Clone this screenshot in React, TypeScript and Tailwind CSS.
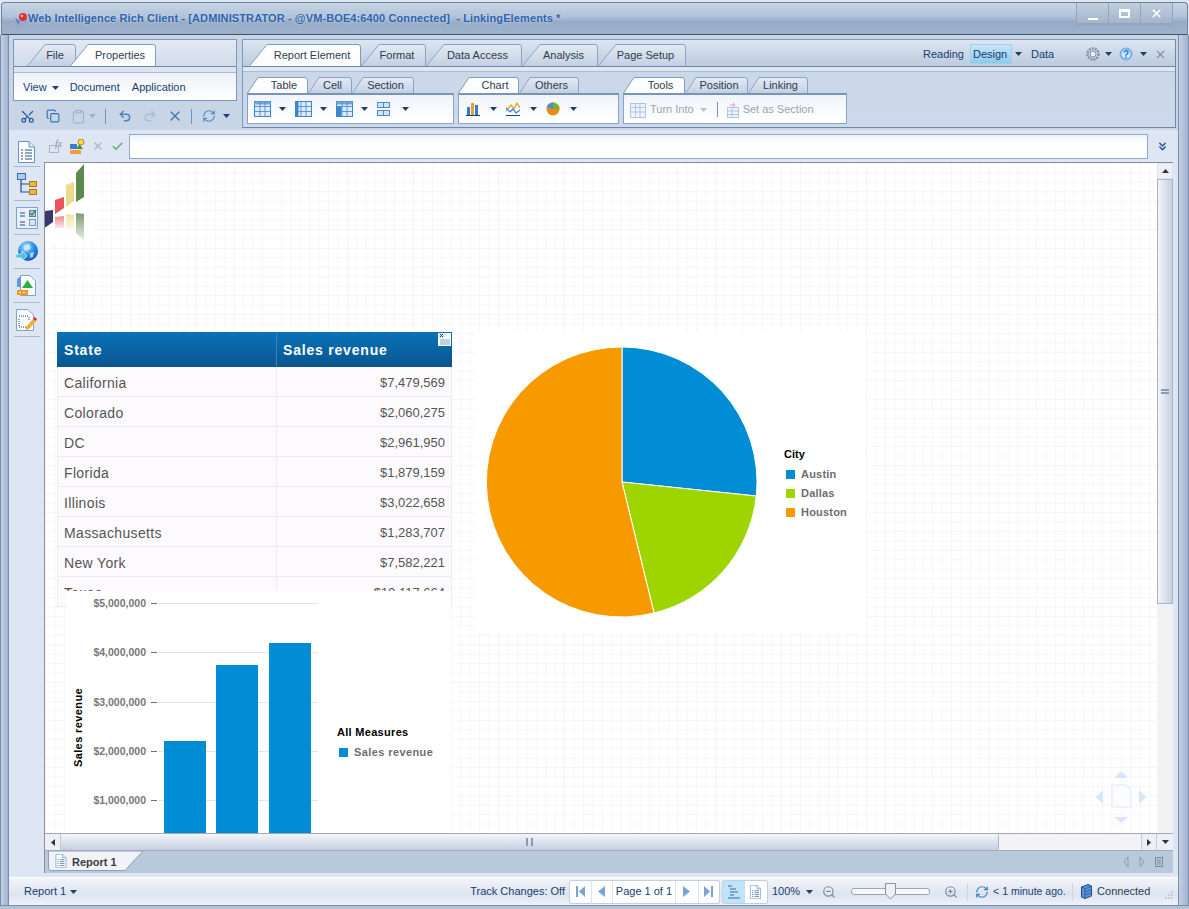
import { Check, ChevronsDown, Clipboard, Copy, Redo2, RefreshCw, Scissors, Undo2, X, ZoomIn, ZoomOut } from "lucide-react";
import type { ReactNode } from "react";

const rows = [
  ["California", "$7,479,569"],
  ["Colorado", "$2,060,275"],
  ["DC", "$2,961,950"],
  ["Florida", "$1,879,159"],
  ["Illinois", "$3,022,658"],
  ["Massachusetts", "$1,283,707"],
  ["New York", "$7,582,221"],
  ["Texas", "$10,117,664"],
];

const ticks = [
  { label: "$5,000,000", y: 12 },
  { label: "$4,000,000", y: 61 },
  { label: "$3,000,000", y: 111 },
  { label: "$2,000,000", y: 160 },
  { label: "$1,000,000", y: 209 },
];

const bars = [
  { x: 98, y: 150 },
  { x: 150, y: 74 },
  { x: 203, y: 52 },
];

function Caret({ className = "" }: { className?: string }) {
  return (
    <svg width="7" height="4" viewBox="0 0 7 4" className={className}>
      <path d="M0 0h7L3.5 4z" fill="#1c3f6e" />
    </svg>
  );
}

function Tab({
  label,
  active = false,
  width,
  small = false,
  className = "",
}: {
  label: string;
  active?: boolean;
  width: number;
  small?: boolean;
  className?: string;
}) {
  const h = small ? 16 : 22;
  const s = small ? 11 : 18;
  const id = `t${label.replace(/\s/g, "")}`;
  const pad = small ? (active ? "pl-[13px]" : "pl-[5px]") : active ? "pl-[14px]" : "pl-[7px]";
  return (
    <div className={`relative shrink-0 ${className}`} style={{ width, height: h }}>
      <svg width={width} height={h} className="absolute inset-0">
        <defs>
          <linearGradient id={id} x1="0" x2="0" y1="0" y2="1">
            <stop offset="0" stopColor={active ? "#ffffff" : "#e4eaf4"} />
            <stop offset="1" stopColor={active ? "#fbfcfe" : "#c3d0e3"} />
          </linearGradient>
        </defs>
        <path
          d={`M0.5 ${h} L${s} 0.5 H${width - 3} Q${width - 0.5} 0.5 ${width - 0.5} 3 V${h}`}
          fill={`url(#${id})`}
          stroke={active ? "#7f9dc0" : "#8ba4c4"}
        />
      </svg>
      <span className={`absolute inset-0 flex items-center justify-center pt-[1px] text-[11px] ${pad} text-[#2f3d4e]`}>
        {label}
      </span>
    </div>
  );
}

function GridIcon({ fill = "#3e86c9", mode = "all" }: { fill?: string; mode?: "all" | "cols" | "rows" }) {
  return (
    <svg width="17" height="16" viewBox="0 0 17 16">
      <rect x="0.5" y="0.5" width="16" height="15" fill="#dcebfa" stroke={fill} />
      {mode === "all" && <rect x="0.5" y="0.5" width="16" height="3" fill="#70a8e0" />}
      {mode === "cols" && <rect x="0.5" y="0.5" width="3" height="15" fill={fill} />}
      {mode === "rows" && (
        <>
          <rect x="0.5" y="0.5" width="16" height="3" fill="#70a8e0" />
          <rect x="0.5" y="5.5" width="5" height="10" fill={fill} />
        </>
      )}
      <path d="M1 5.5H16M1 10.5H16M6 1V15M11 1V15" stroke={fill} strokeWidth="0.8" />
    </svg>
  );
}

function SectionIcon() {
  return (
    <svg width="13" height="16" viewBox="0 0 13 16">
      <rect x="0.5" y="1.5" width="12" height="5" fill="#cfe2f6" stroke="#4a8bc9" />
      <rect x="0.5" y="9.5" width="12" height="5" fill="#cfe2f6" stroke="#4a8bc9" />
      <path d="M6.5 2V6M6.5 10V14" stroke="#4a8bc9" />
    </svg>
  );
}

function BarsIcon() {
  return (
    <svg width="14" height="14" viewBox="0 0 14 14">
      <rect x="1" y="5" width="3" height="8" fill="#2f7fd0" />
      <rect x="5" y="1" width="3" height="12" fill="#f0a020" />
      <rect x="9" y="3" width="3" height="10" fill="#2f7fd0" />
      <path d="M0 13.5H14" stroke="#1c3f6e" />
    </svg>
  );
}

function LineIcon() {
  return (
    <svg width="14" height="14" viewBox="0 0 14 14" fill="none">
      <path d="M0 9L5 3L8 7L11 1L14 6" stroke="#f0a020" strokeWidth="1.3" />
      <path d="M0 6L4 10L7 7L10 11L14 8" stroke="#2f7fd0" strokeWidth="1.2" />
      <path d="M0 13.5H14" stroke="#1c3f6e" />
    </svg>
  );
}

function PieIcon({ size = 14 }: { size?: number }) {
  return (
    <svg width={size} height={size} viewBox="0 0 14 14">
      <circle cx="7" cy="7" r="6.5" fill="#e88a18" />
      <path d="M7 7V.5A6.5 6.5 0 0 1 13.5 7z" fill="#6cb52e" />
      <path d="M7 7V.5A6.5 6.5 0 0 0 .9 5z" fill="#4a8fd0" />
    </svg>
  );
}

function DocIcon({ className = "" }: { className?: string }) {
  return (
    <svg width="17" height="22" viewBox="0 0 17 22" className={className}>
      <path d="M.5.5H11L16.5 6V21.5H.5z" fill="#fff" stroke="#5f92cf" />
      <path d="M11 .5V6H16.5" fill="#dce8f7" stroke="#5f92cf" />
      <path d="M3 9H5M7 9H14M3 12H5M7 12H14M3 15H5M7 15H14M3 18H5M7 18H14" stroke="#1f4f8f" />
    </svg>
  );
}

function SideItem({ children, first = false }: { children: ReactNode; first?: boolean }) {
  return (
    <div className={`${first ? "h-[29px]" : "h-[34px]"} w-[26px] flex items-center justify-center border-b border-[#a9b9cf]`}>
      {children}
    </div>
  );
}

function SideIcons() {
  return (
    <div className="flex flex-col items-center pt-[8px] w-[35px] shrink-0">
      <SideItem first>
        <DocIcon />
      </SideItem>
      <SideItem>
        <svg width="20" height="22" viewBox="0 0 20 22" fill="none">
          <rect x=".5" y=".5" width="8" height="6" fill="#a9cbef" stroke="#3f6a9f" />
          <rect x="12.5" y="8.5" width="7" height="5" fill="#f3b53b" stroke="#a87a20" />
          <rect x="12.5" y="16.5" width="7" height="5" fill="#f3b53b" stroke="#a87a20" />
          <path d="M4 7V19H12M4 11H12" stroke="#1f4f8f" strokeWidth="1.2" />
        </svg>
      </SideItem>
      <SideItem>
        <svg width="22" height="22" viewBox="0 0 22 22" fill="none">
          <rect x=".5" y=".5" width="21" height="21" fill="#e8f0fb" stroke="#7ba3d3" />
          <path d="M4 6H9M4 9H9M4 15H9M4 18H9" stroke="#1f4f8f" />
          <rect x="13.5" y="3.5" width="6" height="6" fill="#b7cbe2" stroke="#5b7ea6" />
          <path d="M14 6L16 8L20 3" stroke="#2f8f3f" strokeWidth="1.3" />
          <rect x="13.5" y="12.5" width="6" height="6" fill="#dbe4f0" stroke="#7e98b8" />
        </svg>
      </SideItem>
      <SideItem>
        <svg width="22" height="22" viewBox="0 0 22 22">
          <defs>
            <radialGradient id="globe" cx="0.4" cy="0.3" r="0.8">
              <stop offset="0" stopColor="#b5e3ff" />
              <stop offset="0.5" stopColor="#2a8ee8" />
              <stop offset="1" stopColor="#0a4fb0" />
            </radialGradient>
          </defs>
          <circle cx="12" cy="10" r="10" fill="url(#globe)" />
          <path d="M8 5L13 3L15 7L11 10L8 9zM14 12L18 11L17 16L14 17z" fill="#dff2ff" opacity=".7" />
          <path d="M0 13H6V10L11 15L6 20V17H0z" fill="#52c1dd" stroke="#fff" strokeWidth=".6" />
        </svg>
      </SideItem>
      <SideItem>
        <svg width="20" height="21" viewBox="0 0 20 21">
          <path d="M3.5.5H13L18.5 6V20.5H3.5z" fill="#fff" stroke="#7ba3d3" />
          <path d="M0 4L4 1V12H0z" fill="#5b9be8" />
          <path d="M5 13L10.500 5L16 13z" fill="#2fae3f" />
          <rect x="0" y="15" width="11" height="5" fill="#f59a1c" />
          <path d="M2 17.500H4M6 17.500H8" stroke="#fff" />
        </svg>
      </SideItem>
      <SideItem>
        <svg width="21" height="22" viewBox="0 0 21 22" fill="none">
          <path d="M.5.5H12L17.500 6V21.500H.5z" fill="#fff" stroke="#7ba3d3" />
          <path d="M3 7H12M3 10V18M3 18H10M13 8V11" stroke="#1f3f6f" strokeDasharray="1 1" />
          <path d="M10 18L17 10L20 12L13 20L10 21z" fill="#f0b030" />
          <path d="M17 10L20 12L21 10L18.500 8z" fill="#d03030" />
        </svg>
      </SideItem>
    </div>
  );
}

function Logo() {
  return (
    <svg width="48" height="80" viewBox="0 0 48 80" className="absolute left-0 top-0">
      <defs>
        <linearGradient id="r1" x1="0" x2="0" y1="0" y2="1">
          <stop offset="0" stopColor="#e88f8f" />
          <stop offset="1" stopColor="#fbe8e8" />
        </linearGradient>
        <linearGradient id="r2" x1="0" x2="0" y1="0" y2="1">
          <stop offset="0" stopColor="#efe3a0" />
          <stop offset="1" stopColor="#fdfbee" />
        </linearGradient>
        <linearGradient id="r3" x1="0" x2="0" y1="0" y2="1">
          <stop offset="0" stopColor="#7c9a70" />
          <stop offset="1" stopColor="#eef3ea" />
        </linearGradient>
      </defs>
      <path d="M0 48L8 47V59L1 64H0z" fill="#38386e" />
      <path d="M10 37L19 34V45L10 51z" fill="#e8545a" />
      <path d="M21 22L29 19V38L21 44z" fill="#eadb8c" />
      <path d="M31 10L39 1V34L31 39z" fill="#5b8a4a" />
      <path d="M10 54L19 53V65H10z" fill="url(#r1)" />
      <path d="M21 51L29 52V68L21 64z" fill="url(#r2)" />
      <path d="M31 50L39 51V78L31 70z" fill="url(#r3)" />
    </svg>
  );
}

function Navigator() {
  return (
    <svg width="52" height="54" viewBox="0 0 52 54" className="absolute left-[1050px] top-[607px]">
      <path d="M26 1L33 8H19zM26 53L19 47H33zM1 27L8 20V34zM51 27L44 20V34z" fill="#d9e6f8" />
      <path d="M17 15H31L36 20V37H17z" fill="#fbfcff" stroke="#dfe8f6" />
    </svg>
  );
}

function Pie() {
  return (
    <div className="absolute left-[431px] top-[169px] w-[390px] h-[300px] bg-white">
      <svg width="290" height="290" viewBox="-145 -145 290 290" className="absolute left-[1px] top-[5px]">
        <path d="M0 0V-135A135 135 0 0 1 134.300 14z" fill="#008dd5" stroke="#fff" />
        <path d="M0 0L134.300 14A135 135 0 0 1 32 131z" fill="#9ed400" stroke="#fff" />
        <path d="M0 0L32 131A135 135 0 1 1 0 -135z" fill="#f79a00" stroke="#fff" />
      </svg>
      <div className="absolute left-[308px] top-[114px] text-[11px] font-bold text-black">City</div>
      {[
        ["Austin", "bg-[#008dd5]", 134],
        ["Dallas", "bg-[#9ed400]", 153],
        ["Houston", "bg-[#f79a00]", 172],
      ].map(([name, color, top]) => (
        <div key={name as string} className="absolute left-[310px] flex items-center gap-[6px]" style={{ top: top as number }}>
          <span className={`w-[9px] h-[9px] ${color}`} />
          <span className="text-[11px] font-bold text-[#6e6e6e] tracking-[0.2px]">{name}</span>
        </div>
      ))}
    </div>
  );
}

function BarChart() {
  return (
    <div className="absolute left-[21px] top-[428px] w-[385px] h-[260px] bg-white">
      {ticks.map((t) => (
        <div key={t.label}>
          <span className="absolute right-[305px] text-[10.5px] font-bold text-[#777] leading-[12px]" style={{ top: t.y - 6 }}>
            {t.label}
          </span>
          <div className="absolute left-[85px] w-[6px] h-px bg-[#707070]" style={{ top: t.y }} />
          <div className="absolute left-[92px] w-[160px] h-px bg-[#e4e4e4]" style={{ top: t.y }} />
        </div>
      ))}
      {bars.map((b) => (
        <div key={b.x} className="absolute w-[42px] h-[260px] bg-[#008dd5]" style={{ left: b.x, top: b.y }} />
      ))}
      <div className="absolute left-[-23px] top-[130px] w-[70px] flex justify-center -rotate-90 text-[11px] font-bold text-black leading-[13px] whitespace-nowrap tracking-[0.4px]">
        Sales revenue
      </div>
      <div className="absolute left-[271px] top-[133px] text-[11px] font-bold text-black tracking-[0.3px]">All Measures</div>
      <div className="absolute left-[273px] top-[153px] flex items-center gap-[6px]">
        <span className="w-[9px] h-[9px] bg-[#008dd5]" />
        <span className="text-[11px] font-bold text-[#6e6e6e] tracking-[0.4px]">Sales revenue</span>
      </div>
    </div>
  );
}

function ReportTable() {
  return (
    <div className="absolute left-[12px] top-[169px] w-[395px] h-[276px] overflow-hidden">
      <div className="flex h-[35px] pt-[1px] bg-[linear-gradient(#0a72b8,#09558f)] text-white text-[14px] font-bold tracking-[0.8px] items-center relative">
        <div className="w-[220px] pl-[7px] h-full flex items-center border-r border-[#3d80b3]">State</div>
        <div className="pl-[6px]">Sales revenue</div>
        <svg width="13" height="13" viewBox="0 0 13 13" className="absolute right-[1px] top-[1px]">
          <rect width="13" height="13" fill="#fff" />
          <rect width="7" height="5" fill="#dfe6ef" />
          <path d="M2 1L5 4M5 1L2 4" stroke="#1f3f6f" />
          <path d="M2 7H12M2 9H12M2 11H12" stroke="#7fa2c8" />
        </svg>
      </div>
      {rows.map(([state, revenue]) => (
        <div key={state} className="flex h-[30px] items-center bg-[#fdfafd] border-x border-b border-[#ebebf0] text-[#555]">
          <div className="w-[219px] pl-[6px] pt-[3px] h-full flex items-center border-r border-[#ebebf0] text-[14px] tracking-[0.35px]">{state}</div>
          <div className="flex-1 text-right pr-[6px] pt-[2px] text-[13px]">{revenue}</div>
        </div>
      ))}
    </div>
  );
}

function Ribbon() {
  return (
    <div className="flex h-[95px] shrink-0 pt-[4px] pl-[4px] bg-[#c8d5e7]">
      <div className="w-[224px] flex flex-col shrink-0">
        <div className="h-[62px] border border-[#7f97b8] flex flex-col bg-[linear-gradient(#e3e9f3,#bccbdf)]">
          <div className="h-[27px] flex items-end pl-[13px] border-b border-[#6f88aa]">
            <Tab label="File" width={49} />
            <Tab label="Properties" width={86} active className="-ml-[6px]" />
          </div>
          <div className="h-[5px] bg-[#dbe4f0]" />
          <div className="flex-1 flex items-center pt-[2px] border-t border-[#a9bcd4] pl-[9px] text-[11px] text-[#173f6e] bg-[linear-gradient(#eef2f8,#ffffff)]">
            <span>View</span>
            <Caret className="ml-[5px] mr-[11px]" />
            <span className="mr-[12px]">Document</span>
            <span>Application</span>
          </div>
        </div>
        <div className="flex items-center h-[28px] mt-[1px] pl-[7px] text-[#2f6ab0]">
          <Scissors size={15} className="text-[#2a5a9a] rotate-[-90deg]" />
          <Copy size={14} className="ml-[11px] text-[#3a73b8]" />
          <Clipboard size={15} className="ml-[11px] text-[#9fb6d3]" />
          <Caret className="ml-[3px] opacity-25" />
          <div className="w-px h-[15px] bg-[#6f93c0] ml-[9px]" />
          <Undo2 size={14} className="ml-[12px] text-[#4c84c4]" strokeWidth={2.5} />
          <Redo2 size={14} className="ml-[11px] text-[#a8bdd8]" strokeWidth={2.5} />
          <X size={16} className="ml-[10px] text-[#4577b0]" />
          <div className="w-px h-[15px] bg-[#6f93c0] ml-[8px]" />
          <RefreshCw size={14} className="ml-[10px] text-[#4c8cc8]" />
          <Caret className="ml-[7px]" />
        </div>
      </div>
      <div className="ml-[5px] w-[934px] h-[89px] border border-[#7f97b8] border-r-[#6f88aa] border-b-[#6f88aa] flex flex-col bg-[linear-gradient(#c9d6e8,#cdd9ea)] shrink-0">
        <div className="h-[27px] flex items-end pl-[6px] border-b border-[#6f88aa] bg-[linear-gradient(#dde5f1,#bccbdf)] relative">
          <Tab label="Report Element" width={112} active />
          <Tab label="Format" width={65} />
          <Tab label="Data Access" width={96} />
          <Tab label="Analysis" width={76} />
          <Tab label="Page Setup" width={88} />
          <div className="absolute left-[680px] top-[4px] right-0 h-[20px] flex items-center text-[11px] text-[#173f6e]">
            <span className="w-[47px]">Reading</span>
            <span className="w-[42px] h-[20px] flex items-center pl-[2px] pt-[1px] border border-[#a4cdea] bg-[linear-gradient(#c8e6f8,#8ccaec)] rounded-[1px]">Design</span>
            <Caret className="ml-[3px] mr-[9px]" />
            <span className="w-[47px]">Data</span>
            <svg width="16" height="16" viewBox="0 0 16 16" className="ml-[7px]">
              <circle cx="8" cy="8" r="5.500" fill="#d2dae4" stroke="#8090a4" strokeWidth="2.500" strokeDasharray="2 1" />
              <circle cx="8" cy="8" r="3" fill="#eef2f7" stroke="#8090a4" />
            </svg>
            <Caret className="ml-[4px]" />
            <svg width="14" height="14" viewBox="0 0 14 14" className="ml-[7px]">
              <circle cx="7" cy="7" r="6.500" fill="#6fb3ee" />
              <circle cx="7" cy="7" r="4.500" fill="#cfe6fb" />
              <text x="7" y="10.500" textAnchor="middle" fontSize="10" fontWeight="bold" fill="#2a70c0">?</text>
            </svg>
            <Caret className="ml-[7px]" />
            <X size={13} className="ml-[7px] text-[#7d8ea3]" />
          </div>
        </div>
        <div className="h-[5px] bg-[#dfe7f2] border-b border-[#a9bcd4]" />
        <div className="flex pl-[4px] pt-[5px] gap-[4px]">
          <div className="w-[207px]">
            <div className="flex h-[16px]">
              <Tab small label="Table" width={61} active />
              <Tab small label="Cell" width={44} />
              <Tab small label="Section" width={62} />
            </div>
            <div className="h-[31px] border border-[#8ba4c4] border-t-2 border-t-[#7a94b6] bg-[linear-gradient(#f0f4fa,#ffffff)] flex items-center pl-[6px]">
              <GridIcon />
              <Caret className="ml-[8px] mr-[9px]" />
              <GridIcon mode="cols" />
              <Caret className="ml-[8px] mr-[9px]" />
              <GridIcon mode="rows" />
              <Caret className="ml-[8px] mr-[9px]" />
              <SectionIcon />
              <Caret className="ml-[12px]" />
            </div>
          </div>
          <div className="w-[161px]">
            <div className="flex h-[16px]">
              <Tab small label="Chart" width={61} active />
              <Tab small label="Others" width={60} />
            </div>
            <div className="h-[31px] border border-[#8ba4c4] border-t-2 border-t-[#7a94b6] bg-[linear-gradient(#f0f4fa,#ffffff)] flex items-center pl-[7px]">
              <BarsIcon />
              <Caret className="ml-[10px] mr-[9px]" />
              <LineIcon />
              <Caret className="ml-[10px] mr-[9px]" />
              <PieIcon />
              <Caret className="ml-[10px]" />
            </div>
          </div>
          <div className="w-[224px]">
            <div className="flex h-[16px]">
              <Tab small label="Tools" width={62} active />
              <Tab small label="Position" width={63} />
              <Tab small label="Linking" width={60} />
            </div>
            <div className="h-[31px] pt-[1px] border border-[#8ba4c4] border-t-2 border-t-[#7a94b6] bg-[linear-gradient(#f0f4fa,#ffffff)] flex items-center pl-[6px] text-[11px] text-[#98a4b2]">
              <svg width="16" height="16" viewBox="0 0 16 16" className="opacity-50">
                <rect x=".5" y="1.500" width="15" height="14" fill="#e5eef9" stroke="#6a95c8" />
                <path d="M1 5.500H15M1 10H15M5.500 2V15M10 2V15" stroke="#6a95c8" />
              </svg>
              <span className="ml-[4px]">Turn Into</span>
              <Caret className="ml-[6px] opacity-30" />
              <div className="w-px h-[15px] bg-[#6f93c0] ml-[10px]" />
              <svg width="16" height="16" viewBox="0 0 16 16" className="opacity-50 ml-[9px]">
                <rect x=".5" y="5.500" width="11" height="10" fill="#e5eef9" stroke="#6a95c8" />
                <path d="M1 9H11M1 12.500H11M5 6V15" stroke="#6a95c8" />
                <path d="M3 3H8M6 1L8 3L6 5" stroke="#c04080" fill="none" />
              </svg>
              <span className="ml-[0px]">Set as Section</span>
            </div>
          </div>
        </div>
      </div>
    </div>
  );
}

function FormulaBar() {
  return (
    <div className="h-[32px] flex items-center shrink-0 pl-[5px]">
      <svg width="16" height="14" viewBox="0 0 16 14" fill="none">
        <rect x=".5" y="6.500" width="9" height="7" stroke="#a8b8cc" />
        <text x="6" y="8" fontSize="10" fontStyle="italic" fontFamily="Liberation Serif" fill="#8898ac">fx</text>
      </svg>
      <svg width="15" height="15" viewBox="0 0 15 15" className="ml-[5px]">
        <rect x="0" y="5" width="7" height="5" fill="#3f7fc8" />
        <path d="M6 10L9.500 5L13 10z" fill="#3a9a3a" />
        <rect x="0" y="11" width="11" height="4" fill="#f0a040" />
        <circle cx="11" cy="3" r="3" fill="#f3e030" stroke="#c03030" strokeWidth=".6" />
      </svg>
      <X size={12} strokeWidth={3} className="ml-[7px] text-[#a7bad2]" />
      <Check size={13} strokeWidth={3} className="ml-[7px] text-[#6cb07c]" />
      <div className="ml-[5px] w-[1019px] h-[25px] border border-[#93a9c8] bg-[linear-gradient(#eef3fa,#ffffff_40%)]" />
      <ChevronsDown size={13} strokeWidth={2.500} className="ml-[8px] text-[#1f4f8f]" />
    </div>
  );
}

function Scrollbars() {
  return (
    <div className="absolute right-0 top-0 bottom-0 w-[16px] bg-[#f2f2f4] flex flex-col">
      <div className="h-[16px] flex items-center justify-center border border-[#dfe3ea] bg-[#eef0f5]">
        <svg width="7" height="4" viewBox="0 0 7 4"><path d="M3.500 0L7 4H0z" fill="#333" /></svg>
      </div>
      <div className="w-full h-[425px] bg-[linear-gradient(90deg,#f3f5fa,#c6cfe4)] border border-[#a9b4c8] flex items-center justify-center">
        <span className="w-[8px] h-[5px] border-y-2 border-[#8f9ab0]" />
      </div>
    </div>
  );
}

function Workspace() {
  return (
    <div className="flex-1 flex flex-col min-w-0">
      <FormulaBar />
      <div className="w-[1129px] flex-1 flex flex-col border-t border-l border-[#8b8f96] min-h-0">
        <div className="relative flex-1 min-h-0 overflow-hidden bg-white bg-[linear-gradient(#f7f4f8_1px,transparent_1px),linear-gradient(90deg,#f7f4f8_1px,transparent_1px)] bg-[size:9.45px_9.45px]">
          <div className="absolute left-0 top-0 w-[48px] h-[80px] bg-white" />
          <Logo />
          <ReportTable />
          <BarChart />
          <Pie />
          <Navigator />
          <Scrollbars />
        </div>
        <div className="h-[18px] shrink-0 flex bg-[#f4f4f6] border-y border-[#a5a9b2]">
          <div className="w-[16px] flex items-center justify-center bg-[#eceff5] border-r border-[#c5ccd8]">
            <svg width="4" height="7" viewBox="0 0 4 7"><path d="M0 3.500L4 0V7z" fill="#333" /></svg>
          </div>
          <div className="w-[938px] bg-[linear-gradient(#f3f5fa,#c6cfe4)] border-r border-[#a9b4c8] rounded-r-[2px] flex items-center justify-center">
            <span className="w-[7px] h-[8px] border-x-2 border-[#8f9ab0]" />
          </div>
          <div className="ml-auto w-[16px] flex items-center justify-center bg-[#eceff5] border-x border-[#c5ccd8]">
            <svg width="4" height="7" viewBox="0 0 4 7"><path d="M4 3.500L0 0V7z" fill="#333" /></svg>
          </div>
          <div className="w-[16px] flex items-center justify-center bg-[#eceff5]">
            <svg width="7" height="4" viewBox="0 0 7 4"><path d="M3.500 4L7 0H0z" fill="#333" /></svg>
          </div>
        </div>
        <div className="h-[22px] shrink-0 bg-[#b9c9dc] flex items-start pl-[3px] relative">
          <div className="relative w-[96px] h-[20px]">
            <svg width="96" height="20" className="absolute inset-0">
              <path d="M.5 0V17Q.5 19.500 3 19.500H77L95 0z" fill="#f1f3f8" stroke="#8ba0be" />
            </svg>
            <DocIcon className="absolute left-[7px] top-[3px] w-[12px] h-[14px]" />
            <span className="absolute left-[24px] top-[3px] text-[11px] font-bold text-[#3c3c3c]">Report 1</span>
          </div>
          <svg width="42" height="12" viewBox="0 0 42 12" fill="none" className="absolute right-[8px] top-[5px]">
            <path d="M5 1L1 6L5 11ZM17 1L21 6L17 11Z" stroke="#8d9bb0" />
            <rect x="32.500" y="1.500" width="7" height="9" stroke="#7d8a9c" />
            <path d="M34 4H38M34 6H38M34 8H38" stroke="#7d8a9c" />
          </svg>
        </div>
      </div>
    </div>
  );
}

function PagerCell({ width, children, last = false }: { width: number; children: ReactNode; last?: boolean }) {
  return (
    <div className={`h-full flex items-center justify-center ${last ? "" : "border-r border-[#dde4ee]"}`} style={{ width }}>
      {children}
    </div>
  );
}

function StatusBar() {
  return (
    <div className="h-[28px] shrink-0 mt-[4px] flex items-center pl-[15px] text-[11px] text-[#173f6e] bg-[linear-gradient(#f4f5f9,#dde4f1_60%,#eef1f7)] border-t border-[#fff]">
      <span>Report 1</span>
      <Caret className="ml-[4px]" />
      <span className="ml-[393px]">Track Changes: Off</span>
      <div className="ml-[4px] w-[151px] h-[24px] flex items-center border border-[#c3cfe0] bg-white rounded-[2px]">
        <PagerCell width={22}>
          <svg width="9" height="11" viewBox="0 0 9 11"><path d="M0 0H2V11H0zM9 0V11L3 5.500z" fill="#7aa4d4" /></svg>
        </PagerCell>
        <PagerCell width={21}>
          <svg width="7" height="11" viewBox="0 0 7 11"><path d="M7 0V11L0 5.500z" fill="#7aa4d4" /></svg>
        </PagerCell>
        <PagerCell width={63}>
          <span>Page 1 of 1</span>
        </PagerCell>
        <PagerCell width={23}>
          <svg width="7" height="11" viewBox="0 0 7 11"><path d="M0 0V11L7 5.500z" fill="#7aa4d4" /></svg>
        </PagerCell>
        <PagerCell width={20} last>
          <svg width="9" height="11" viewBox="0 0 9 11"><path d="M0 0V11L6 5.500zM7 0H9V11H7z" fill="#7aa4d4" /></svg>
        </PagerCell>
      </div>
      <div className="ml-[2px] w-[46px] h-[24px] flex border border-[#c3cfe0] rounded-[2px] bg-white">
        <div className="w-[23px] flex items-center justify-center bg-[#bfe3f7]">
          <svg width="13" height="14" viewBox="0 0 13 14"><path d="M1 1H5M3 4H9M3 7H11M3 10H7M1 13H13" stroke="#3a6aa8" /></svg>
        </div>
        <div className="w-[23px] flex items-center justify-center">
          <DocIcon className="w-[11px] h-[14px]" />
        </div>
      </div>
      <span className="ml-[4px]">100%</span>
      <Caret className="ml-[6px]" />
      <ZoomOut size={14} className="ml-[9px] text-[#7d8a9c]" />
      <div className="relative ml-[15px] w-[79px] h-[7px] border border-[#9aa6b6] rounded-[3px] bg-[#f7f8fb]">
        <svg width="11" height="17" viewBox="0 0 11 17" className="absolute left-[33px] top-[-6px]">
          <path d="M.5.500H10.500V11L5.500 16L.5 11z" fill="#eef0f4" stroke="#8793a4" />
        </svg>
      </div>
      <ZoomIn size={14} className="ml-[14px] text-[#7d8a9c]" />
      <div className="w-px h-[18px] bg-[#cfd6e2] ml-[9px]" />
      <RefreshCw size={14} className="ml-[7px] text-[#3f7fc8]" />
      <span className="ml-[4px] w-[74px] whitespace-nowrap text-[10.5px]">&lt; 1 minute ago.</span>
      <div className="w-px h-[18px] bg-[#cfd6e2] ml-[5px]" />
      <svg width="11" height="15" viewBox="0 0 11 15" className="ml-[8px]">
        <path d="M.5 3L7 .5L10.500 2V12L4 14.500L.5 13z" fill="#5b93d8" stroke="#1f4f8f" />
        <path d="M4 5V14M.5 3L4 5L10.500 2M4 8L10 6M4 11L10 9" stroke="#1f4f8f" fill="none" strokeWidth=".7" />
      </svg>
      <span className="ml-[5px] text-[#2f3d4e]">Connected</span>
      <svg width="10" height="10" viewBox="0 0 10 10" className="ml-[14px] mt-[6px]">
        <path d="M7 1h2v2H7zM4 4h2v2H4zM7 4h2v2H7zM1 7h2v2H1zM4 7h2v2H4zM7 7h2v2H7z" fill="#c4ccd8" />
      </svg>
    </div>
  );
}

export default function App() {
  return (
    <div className="w-[1189px] h-[909px] overflow-hidden flex flex-col bg-[#dfe6f3] font-['Liberation_Sans',sans-serif]">
      <div className="h-[33px] shrink-0 mx-[1px] mt-[2px] flex items-center rounded-t-[4px] border border-[#6d8498] border-b-[#3f5468] bg-[linear-gradient(#c8d5e6,#b0c1d8_45%,#97abc8_60%,#9db0cc)] relative">
        <svg width="14" height="14" viewBox="0 0 14 14" className="ml-[12px]">
          <path d="M1 6L6 9L4 13z" fill="#5d82c4" />
          <circle cx="9" cy="5" r="4" fill="#e03030" />
          <circle cx="8" cy="4" r="1.200" fill="#fbb" />
        </svg>
        <span className="text-[11px] font-bold text-[#2f63ad] whitespace-pre tracking-[0.11px] [text-shadow:0_0_3px_#d5e0ef]">
          Web Intelligence Rich Client - [ADMINISTRATOR - @VM-BOE4:6400 Connected]  - LinkingElements *
        </span>
        <div className="absolute right-[14px] top-0 w-[97px] h-[22px] flex border-b-2 border-x border-[#93a5bd] bg-[linear-gradient(#c2cede,#a3b4cb)]">
          <div className="flex-1 flex items-end justify-center pb-[3px] border-r border-[#93a5bd]"><span className="w-[10px] h-[2px] bg-white" /></div>
          <div className="flex-1 flex items-center justify-center border-r border-[#93a5bd]"><span className="w-[11px] h-[9px] border-2 border-white border-t-[3px]" /></div>
          <div className="flex-1 flex items-center justify-center"><X size={13} strokeWidth={3} className="text-white" /></div>
        </div>
      </div>
      <div className="flex-1 min-h-0 flex">
        <div className="w-[9px] shrink-0 border-x border-[#7a8ea8] bg-[linear-gradient(90deg,#c3d0e3,#9fb2cf)]" />
        <div className="w-[1169px] shrink-0 flex flex-col min-h-0">
          <Ribbon />
          <div className="flex-1 min-h-0 flex">
            <SideIcons />
            <Workspace />
          </div>
          <StatusBar />
        </div>
        <div className="flex-1 border-x border-[#7a8ea8] bg-[linear-gradient(90deg,#c3d0e3,#9fb2cf)]" />
      </div>
      <div className="h-[4px] shrink-0 bg-[#b4c2d6] border-t border-[#7a8ea8]" />
    </div>
  );
}
